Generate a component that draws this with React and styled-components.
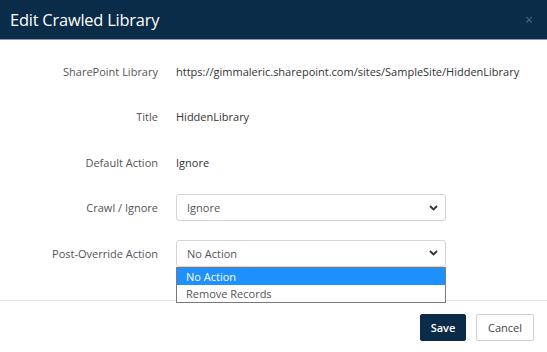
import React from "react";
import styled, { createGlobalStyle } from "styled-components";

const Global = createGlobalStyle`
  html, body { margin: 0; padding: 0; background: #fff; }
  body { font-family: "Open Sans", "Noto Sans", sans-serif; }
`;

const Modal = styled.div`
  width: 547px;
  height: 352px;
  display: flex;
  flex-direction: column;
  background: #fff;
  overflow: hidden;
`;

const Header = styled.div`
  height: 40px;
  box-sizing: border-box;
  background: #0a2c48;
  border-bottom: 1px solid #8a9aaa;
  display: flex;
  align-items: center;
  justify-content: space-between;
  padding: 0 14px 0 10px;
`;

const Title = styled.h1`
  margin: 0;
  font-size: 16.4px;
  font-weight: 400;
  color: #fff;
  letter-spacing: -0.2px;
`;

const Close = styled.span`
  color: #4d6a88;
  font-size: 14px;
  line-height: 1;
`;

const Body = styled.div`
  display: grid;
  grid-template-columns: 158px 270px;
  grid-auto-rows: 27px;
  column-gap: 18px;
  row-gap: 18.5px;
  padding: 17.5px 0 33px 0;
  border-bottom: 1px solid #e2e2e2;
`;

const Label = styled.div`
  display: flex;
  align-items: center;
  justify-content: flex-end;
  font-size: 11px;
  color: #555;
`;

const Value = styled.div`
  display: flex;
  align-items: center;
  font-size: 11px;
  color: #333;
  white-space: nowrap;
`;

const SelectWrap = styled.div`
  position: relative;
`;

const Select = styled.div`
  height: 27px;
  box-sizing: border-box;
  border: 1px solid #d4d4d4;
  border-radius: 3px;
  display: flex;
  align-items: center;
  justify-content: space-between;
  padding: 0 7px 0 10px;
  font-size: 11px;
  color: #555;
  background: #fff;
`;

const List = styled.div`
  position: absolute;
  top: 100%;
  left: 0;
  right: 0;
  background: #fff;
  border: 1px solid #7a7a7a;
  z-index: 2;
`;

const Option = styled.div`
  height: 17px;
  display: flex;
  align-items: center;
  padding-left: 9px;
  font-size: 11px;
  color: ${(p) => (p.$active ? "#fff" : "#555")};
  background: ${(p) => (p.$active ? "#1e90ff" : "#fff")};
`;

const Footer = styled.div`
  display: flex;
  justify-content: flex-end;
  gap: 10px;
  padding: 13px 13px 0 0;
`;

const Button = styled.button`
  height: 27px;
  box-sizing: border-box;
  font-family: inherit;
  font-size: 11px;
  border-radius: 2px;
  padding: 0;
  width: ${(p) => p.$w}px;
  border: 1px solid ${(p) => (p.$primary ? "#0a2c48" : "#d0d0d0")};
  background: ${(p) => (p.$primary ? "#0a2c48" : "#fff")};
  color: ${(p) => (p.$primary ? "#fff" : "#444")};
  font-weight: ${(p) => (p.$primary ? 600 : 400)};
`;

const Chevron = () => (
  <svg width="9" height="6" viewBox="0 0 9 6">
    <path d="M1 1l3.5 3.5L8 1" fill="none" stroke="#333" strokeWidth="1.8" />
  </svg>
);

export default function App() {
  return (
    <>
      <Global />
      <Modal>
        <Header>
          <Title>Edit Crawled Library</Title>
          <Close>×</Close>
        </Header>
        <Body>
          <Label>SharePoint Library</Label>
          <Value>https://gimmaleric.sharepoint.com/sites/SampleSite/HiddenLibrary</Value>
          <Label>Title</Label>
          <Value>HiddenLibrary</Value>
          <Label>Default Action</Label>
          <Value>Ignore</Value>
          <Label>Crawl / Ignore</Label>
          <SelectWrap>
            <Select>
              Ignore
              <Chevron />
            </Select>
          </SelectWrap>
          <Label>Post-Override Action</Label>
          <SelectWrap>
            <Select>
              No Action
              <Chevron />
            </Select>
            <List>
              <Option $active>No Action</Option>
              <Option>Remove Records</Option>
            </List>
          </SelectWrap>
        </Body>
        <Footer>
          <Button $primary $w={46}>Save</Button>
          <Button $w={58}>Cancel</Button>
        </Footer>
      </Modal>
    </>
  );
}
